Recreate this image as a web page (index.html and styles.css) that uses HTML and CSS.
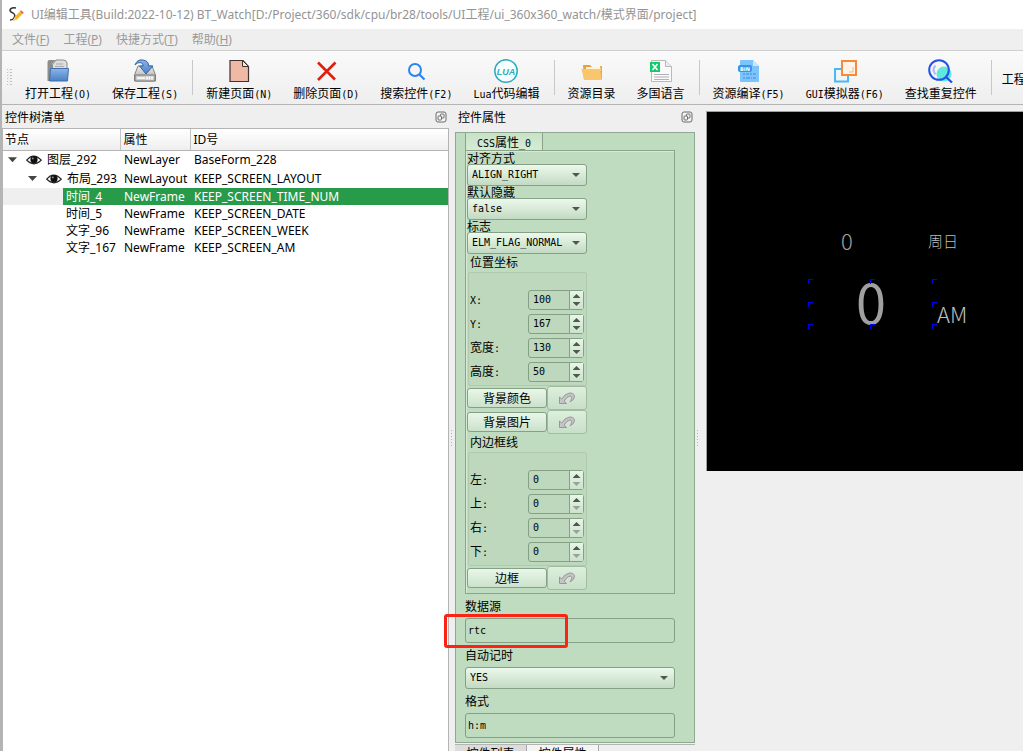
FILE: index.html
```html
<!DOCTYPE html>
<html lang="zh-CN">
<head>
<meta charset="utf-8">
<title>UI编辑工具</title>
<link rel="stylesheet" href="styles.css">
</head>
<body>
<svg class="defs" width="0" height="0" aria-hidden="true">
  <defs>
    <linearGradient id="blue" x1="0" y1="0" x2="0" y2="1"><stop offset="0" stop-color="#8db5e6"/><stop offset="1" stop-color="#4a80c4"/></linearGradient>
    <linearGradient id="metal" x1="0" y1="0" x2="0" y2="1"><stop offset="0" stop-color="#eeeeec"/><stop offset="1" stop-color="#a5a5a3"/></linearGradient>
    <symbol id="undo" viewBox="0 0 18 14"><path d="M1.500 6v6.500h7l-2.400-2.200Q8.500 5.500 12 5q2.800.2.800 4.500l-.8 1.500Q17 8.500 16.500 4.500 15.500 1.500 11.500 2 6.500 3 3.800 8z" fill="#c6c4c8" stroke="#98969a" stroke-width="1"/></symbol>
    <symbol id="eye" viewBox="0 0 16 10"><path d="M.7 5.200Q7.500-3 15.300 5.200Q8 12.500.7 5.200z" fill="#fff" stroke="#222" stroke-width="1.200"/><circle cx="8" cy="4.700" r="3.600" fill="#111"/><circle cx="6.800" cy="3.400" r=".9" fill="#999"/></symbol>
    <symbol id="float" viewBox="0 0 12 12"><rect x="1" y="1" width="10" height="10" rx="2" fill="#f3f3f3" stroke="#6c6c6c"/><rect x="5.500" y="3" width="3.500" height="4" rx=".8" fill="none" stroke="#6c6c6c"/><rect x="3" y="5" width="3.500" height="4" rx=".8" fill="#f3f3f3" stroke="#6c6c6c"/></symbol>
  </defs>
</svg>
<div class="window">
  <header class="titlebar">
    <svg width="17" height="18" viewBox="0 0 17 18"><path d="M8 2Q3 1 2 4q0 2 3 3 3 2 1 5-1 2-4 2" fill="none" stroke="#333" stroke-width="1.500"/><path d="M5 15l1.500-4 6-6 2.500 2.500-6 6z" fill="#f9b51c"/><path d="M12 5.300l1-1 2.800 2.500-1 1z" fill="#e8505a"/><path d="M5 15l1.300-3.500 2.300 2.200z" fill="#eecf9d"/></svg>
    <span>UI编辑工具(Build:2022-10-12) BT_Watch[D:/Project/360/sdk/cpu/br28/tools/UI工程/ui_360x360_watch/模式界面/project]</span>
  </header>
  <nav class="menubar">
    <button>文件(<u>F</u>)</button><button>工程(<u>P</u>)</button><button>快捷方式(<u>T</u>)</button><button>帮助(<u>H</u>)</button>
  </nav>
  <div class="toolbar" role="toolbar">
    <span class="grip"></span>
    <button class="tool"><svg width="24" height="24" viewBox="0 0 24 24"><path d="M1.500 3q0-2 2-2h6L6 5v17H1.500z" fill="#8d8d8d"/><path d="M6.500 5.500L10 1h7.500q3 0 3.500 3v8H6.500z" fill="#dededc" stroke="#8a8a88"/><path d="M10 5h7M9 7.500h9" stroke="#aaa"/><path d="M4.500 9.500h18l-1 12.500H3.500z" fill="url(#blue)" stroke="#3d6fae"/></svg><span>打开工程<i>(O)</i></span></button>
    <button class="tool"><svg width="24" height="24" viewBox="0 0 24 24"><path d="M5 7h14l3.500 9v6h-21v-6z" fill="url(#metal)" stroke="#858583"/><rect x="2" y="16" width="20" height="6" rx="1" fill="#cbcbc9" stroke="#777"/><path d="M4 19h8m2-1.500v3m2.500-3v3m2.500-3v3" stroke="#fff" stroke-width="1.500"/><path d="M2 6Q4 0 10 1q6 1 5.500 6H20l-7 8-6.500-8h3.800Q10 3.500 7 3.500 4 3.500 2 6z" fill="url(#blue)" stroke="#3568a5"/></svg><span>保存工程<i>(S)</i></span></button>
    <span class="sep"></span>
    <button class="tool"><svg width="24" height="24" viewBox="0 0 24 24"><path d="M3 1.500h13l5.500 6v15H3z" fill="#efb9a6" stroke="#3d3331" stroke-width="1.200"/><path d="M15.500 1.500v6h6z" fill="#f9e6df" stroke="#3d3331"/></svg><span>新建页面<i>(N)</i></span></button>
    <button class="tool"><svg width="24" height="24" viewBox="0 0 24 24"><path d="M4 3.500L21 20.500M21.500 3.500L4 21" stroke="#df1f0f" stroke-width="2.600"/></svg><span>删除页面<i>(D)</i></span></button>
    <button class="tool"><svg width="24" height="24" viewBox="0 0 24 24"><circle cx="11" cy="11" r="6" fill="none" stroke="#2b84f5" stroke-width="2"/><path d="M15.500 15.500L20.500 20.500" stroke="#2b84f5" stroke-width="2.200"/></svg><span>搜索控件<i>(F2)</i></span></button>
    <button class="tool"><svg width="24" height="24" viewBox="0 0 24 24"><circle cx="12" cy="12" r="11.200" fill="#f5ffff" stroke="#2faabd" stroke-width="1.500"/><text x="12" y="15.500" class="lua">LUA</text></svg><span><i>Lua</i>代码编辑</span></button>
    <span class="sep"></span>
    <button class="tool"><svg width="24" height="24" viewBox="0 0 24 24"><path d="M3 6h7l2 2h10v12H4z" fill="#e6a13e"/><path d="M6 8h15v4H6z" fill="#fff3d8"/><path d="M1.500 10H20l2 11H4z" fill="#f8c66c"/><path d="M20 7h2v14z" fill="#eaa944"/></svg><span>资源目录</span></button>
    <button class="tool"><svg width="24" height="24" viewBox="0 0 24 24"><path d="M2.500 1.500h14l6 6v15h-20z" fill="#fafafa" stroke="#b9b9bd"/><path d="M16.500 1.500v6h6" fill="#ececf0" stroke="#b9b9bd"/><path d="M5 15.500h15M5 18h15M5 20.500h15" stroke="#b0b0b8"/><rect x="1" y="3" width="10" height="10" fill="#13ca6a"/><path d="M3.500 5l5 6m0-6l-5 6" stroke="#fff" stroke-width="1.600"/></svg><span>多国语言</span></button>
    <span class="sep"></span>
    <button class="tool"><svg width="24" height="24" viewBox="0 0 24 24"><path d="M3 2q0-1 1-1h12l6 6v15q0 1-1 1H4q-1 0-1-1z" fill="#7cc4fa"/><path d="M16 1l6 6h-6z" fill="#c9e7ff"/><path d="M6 15h2m1 0h3m1 0h2m1 0h3M6 19h2m1 0h4m1 0h1m1 0h3" stroke="#58a8ee" stroke-width="2"/><rect x="1" y="6" width="14" height="7" rx="2" fill="#3a92ec"/><text x="8" y="11.500" class="bin">BIN</text></svg><span>资源编译<i>(F5)</i></span></button>
    <button class="tool"><svg width="24" height="24" viewBox="0 0 24 24"><path d="M9 10H2v12.500h13V17" fill="none" stroke="#48b9f5" stroke-width="2"/><rect x="9" y="2" width="14" height="14" fill="#fff4ea" stroke="#f58a3d" stroke-width="2"/><path d="M20 8v5h-4" fill="none" stroke="#f8b58a"/></svg><span><i>GUI</i>模拟器<i>(F6)</i></span></button>
    <button class="tool"><svg width="25" height="24" viewBox="0 0 25 24"><circle cx="16" cy="15" r="7.500" fill="#5fe8de"/><circle cx="11" cy="11" r="9.800" fill="none" stroke="#2452e6" stroke-width="2"/><path d="M7.500 6.500q-4 4 0 9" fill="none" stroke="#a9b9f5" stroke-width="2"/><path d="M18 18l6 5.500" stroke="#2452e6" stroke-width="2.300"/></svg><span>查找重复控件</span></button>
    <span class="sep"></span>
    <button class="tool tool-text"><span>工程</span></button>
  </div>

  <main class="workspace">
    <section class="dock">
      <h2 class="dock-title">控件树清单<button aria-label="浮动"><svg width="12" height="12"><use href="#float"/></svg></button></h2>
      <div class="tree-box">
        <table class="tree">
          <colgroup><col class="c-node"><col class="c-type"><col></colgroup>
          <thead><tr><th>节点</th><th>属性</th><th>ID号</th></tr></thead>
          <tbody>
            <tr class="parent"><td><div class="node"><b class="tri"></b><svg width="16" height="10"><use href="#eye"/></svg>图层_292</div></td><td>NewLayer</td><td>BaseForm_228</td></tr>
            <tr class="parent"><td><div class="node level2"><b class="tri"></b><svg width="16" height="10"><use href="#eye"/></svg>布局_293</div></td><td>NewLayout</td><td>KEEP_SCREEN_LAYOUT</td></tr>
            <tr class="selected"><td><div class="leaf">时间_4</div></td><td>NewFrame</td><td>KEEP_SCREEN_TIME_NUM</td></tr>
            <tr><td><div class="leaf">时间_5</div></td><td>NewFrame</td><td>KEEP_SCREEN_DATE</td></tr>
            <tr><td><div class="leaf">文字_96</div></td><td>NewFrame</td><td>KEEP_SCREEN_WEEK</td></tr>
            <tr><td><div class="leaf">文字_167</div></td><td>NewFrame</td><td>KEEP_SCREEN_AM</td></tr>
          </tbody>
        </table>
      </div>
    </section>
    <div class="splitter"><span></span></div>
    <section class="dock">
      <h2 class="dock-title">控件属性<button aria-label="浮动"><svg width="12" height="12"><use href="#float"/></svg></button></h2>
      <div class="props">
        <button class="css-tab"><i>CSS</i>属性<i>_0</i></button>
        <div class="pane">
          <label for="align">对齐方式</label>
          <span class="select"><select id="align"><option>ALIGN_RIGHT</option></select></span>
          <label for="hide">默认隐藏</label>
          <span class="select"><select id="hide"><option>false</option></select></span>
          <label for="flag">标志</label>
          <span class="select"><select id="flag"><option>ELM_FLAG_NORMAL</option></select></span>
          <h3>位置坐标</h3>
          <div class="group">
            <div class="field"><label for="x"><i>X:</i></label><span class="spin"><input id="x" value="100"><span><button class="up" aria-label="加"></button><button class="down" aria-label="减"></button></span></span></div>
            <div class="field"><label for="y"><i>Y:</i></label><span class="spin"><input id="y" value="167"><span><button class="up" aria-label="加"></button><button class="down" aria-label="减"></button></span></span></div>
            <div class="field"><label for="w">宽度<i>:</i></label><span class="spin"><input id="w" value="130"><span><button class="up" aria-label="加"></button><button class="down" aria-label="减"></button></span></span></div>
            <div class="field"><label for="h">高度<i>:</i></label><span class="spin"><input id="h" value="50"><span><button class="up" aria-label="加"></button><button class="down" aria-label="减"></button></span></span></div>
          </div>
          <div class="pair"><button class="push">背景颜色</button><button class="reset" aria-label="还原背景颜色"><svg width="18" height="14"><use href="#undo"/></svg></button></div>
          <div class="pair"><button class="push">背景图片</button><button class="reset" aria-label="还原背景图片"><svg width="18" height="14"><use href="#undo"/></svg></button></div>
          <h3>内边框线</h3>
          <div class="group">
            <div class="field"><label for="l">左<i>:</i></label><span class="spin"><input id="l" value="0"><span><button class="up" aria-label="加"></button><button class="down off" aria-label="减"></button></span></span></div>
            <div class="field"><label for="t">上<i>:</i></label><span class="spin"><input id="t" value="0"><span><button class="up" aria-label="加"></button><button class="down off" aria-label="减"></button></span></span></div>
            <div class="field"><label for="r">右<i>:</i></label><span class="spin"><input id="r" value="0"><span><button class="up" aria-label="加"></button><button class="down off" aria-label="减"></button></span></span></div>
            <div class="field"><label for="b">下<i>:</i></label><span class="spin"><input id="b" value="0"><span><button class="up" aria-label="加"></button><button class="down off" aria-label="减"></button></span></span></div>
          </div>
          <div class="pair"><button class="push">边框</button><button class="reset" aria-label="还原边框"><svg width="18" height="14"><use href="#undo"/></svg></button></div>
        </div>
        <div class="block"><label for="src">数据源</label><span class="marked"><input class="text" id="src" value="rtc"></span></div>
        <div class="block"><label for="auto">自动记时</label><span class="select wide"><select id="auto"><option>YES</option></select></span></div>
        <div class="block"><label for="fmt">格式</label><input class="text" id="fmt" value="h:m"></div>
      </div>
      <div class="dock-tabs"><button>控件列表</button><button class="active">控件属性</button></div>
    </section>
    <div class="splitter"><span></span></div>
    <section class="stage">
      <div class="screen">
        <span class="item num-small">0</span>
        <span class="item week">周日</span>
        <span class="item num-big">0</span>
        <span class="item am">AM</span>
        <div class="handles"><b></b><b></b><b></b><b></b><b class="none"></b><b></b><b></b><b></b><b></b></div>
      </div>
    </section>
  </main>
</div>
</body>
</html>
```
FILE: styles.css
```css
*, *::before, *::after { box-sizing: border-box; }

body {
  margin: 0;
  background: #efefef;
  color: #000;
  font: 12px/12px "Noto Sans CJK SC", sans-serif;
}

button, input, select {
  margin: 0;
  padding: 0;
  border: 0;
  background: none;
  color: inherit;
  font: inherit;
}

svg { display: block; flex: none; }
.defs { position: absolute; }

/* half-width latin beside full-width characters */
i {
  font: 10px/12px "DejaVu Sans Mono", monospace;
}

.window {
  display: flex;
  flex-direction: column;
  height: 100vh;
  overflow: hidden;
  border-left: 2px solid #b4b4b4;
}

.titlebar {
  display: flex;
  align-items: center;
  gap: 6px;
  height: 29px;
  flex: none;
  padding-left: 6px;
  background: #fff;
  color: #949494;
  font: 12px/18px "Noto Sans", "Noto Sans CJK SC", sans-serif;
  white-space: nowrap;
}

.menubar {
  display: flex;
  gap: 14px;
  height: 22px;
  flex: none;
  padding-left: 10px;
  border-bottom: 1px solid #cfcfcf;
  color: #9a9a9a;
  font: 12px/20px "Noto Sans", "Noto Sans CJK SC", sans-serif;
}

.toolbar {
  display: flex;
  height: 54px;
  flex: none;
  overflow: hidden;
  border-bottom: 1px solid #b4b4b4;
  background: linear-gradient(#fafafa, #eeeeee);
}

.grip {
  width: 5px;
  height: 17px;
  flex: none;
  margin: 18px 3px 0 5px;
  background: linear-gradient(#efefef, #efefef) 1px 0 / 2px 100% no-repeat, repeating-linear-gradient(#c0c0c0 0 1px, transparent 1px 3px);
}

.tool {
  display: flex;
  flex-direction: column;
  align-items: center;
  gap: 3px;
  flex: none;
  padding: 8px 11px 0 10px;
  line-height: 12px;
  white-space: nowrap;
}

.tool > span { line-height: 14px; }
.tool-text { justify-content: center; padding: 2px 7px 0; }

.sep {
  width: 7px;
  flex: none;
  margin: 9px 0;
  background: linear-gradient(#c8c8c8, #c8c8c8) 3px 0 / 1px 100% no-repeat;
}

.lua { font: italic bold 9px "Liberation Sans", sans-serif; fill: #2faabd; text-anchor: middle; }
.bin { font: bold 5px "DejaVu Sans", sans-serif; fill: #fff; text-anchor: middle; }

.workspace {
  display: grid;
  grid-template-columns: 447px 6px 240px 11px 1fr;
  flex: 1;
  min-height: 0;
}

.dock {
  display: flex;
  flex-direction: column;
  min-height: 0;
}

.dock-title {
  display: flex;
  align-items: center;
  justify-content: space-between;
  height: 23px;
  flex: none;
  margin: 0;
  padding: 0 2px 0 3px;
  font-size: 12px;
  font-weight: 400;
}

.splitter { padding: 325px 0 0 2px; }

.splitter span {
  display: block;
  width: 1px;
  height: 16px;
  background: repeating-linear-gradient(#b4b4b4 0 1px, transparent 1px 3px);
}

.tree-box {
  flex: 1;
  border: 1px solid #b4b4b4;
  border-bottom: 0;
  background: #fff;
}

.tree {
  width: 100%;
  border-collapse: collapse;
  table-layout: fixed;
  font: 12px/17px "Noto Sans", "Noto Sans CJK SC", sans-serif;
  white-space: nowrap;
}

.c-node { width: 117px; }
.c-type { width: 70px; }

.tree th {
  height: 21px;
  padding: 0 3px;
  border-right: 1px solid #c4c4c4;
  border-bottom: 1px solid #b4b4b4;
  background: linear-gradient(#ffffff, #eeeeee);
  font-weight: 400;
  text-align: left;
}

.tree th:first-child { padding-left: 2px; }
.tree th:last-child { border-right: 0; }
.tree td { height: 17px; padding: 0 0 0 4px; }
.tree td:first-child { padding: 0; }
.tree .parent td { height: 19px; }

.node {
  display: flex;
  align-items: center;
  gap: 5px;
  padding-left: 5px;
}

.node.level2 { padding-left: 25px; }

.tri {
  width: 9px;
  height: 5px;
  margin-right: 4px;
  background: #444;
  clip-path: polygon(0 0, 100% 0, 50% 100%);
}

.leaf { margin-left: 60px; padding-left: 3px; }
.selected { color: #fff; }
.selected td { background: #289b4b; }
.selected td:first-child { background: #efefef; }
.selected .leaf { background: #289b4b; }

.props {
  flex: none;
  margin-top: 4px;
  padding: 0 19px 4px 9px;
  border: 1px solid #8fa892;
  background: #c0dcc0;
}

.css-tab {
  display: block;
  width: 78px;
  height: 17px;
  border: 1px solid #8ba28b;
  border-width: 0 1px;
  background: linear-gradient(#c8e2c8, #d4ecd4);
  line-height: 15px;
}

.pane {
  display: flex;
  flex-direction: column;
  align-items: flex-start;
  padding: 1px 0 3px 1px;
  border: 1px solid #8ba28b;
  box-shadow: inset 1px 1px #d6ead6;
}

.pane > label { height: 12px; }

.select {
  position: relative;
  display: block;
  width: 120px;
  height: 22px;
}

.select.wide { width: 100%; }

.select::after {
  content: "";
  position: absolute;
  top: 9px;
  right: 7px;
  width: 8px;
  height: 4px;
  background: #4c5a4c;
  clip-path: polygon(0 0, 100% 0, 50% 100%);
  pointer-events: none;
}

.select select {
  width: 100%;
  height: 22px;
  padding: 0 4px;
  appearance: none;
  border: 1px solid #86a086;
  border-radius: 3px;
  background: linear-gradient(#ecf9ec, #c3dac3);
  font: 10px/20px "DejaVu Sans Mono", monospace;
}

h3 {
  margin: 1px 0 4px 3px;
  font-size: 12px;
  font-weight: 400;
  line-height: 13px;
}

.group {
  display: flex;
  flex-direction: column;
  gap: 4px;
  width: 119px;
  margin-left: 1px;
  padding: 17px 2px 3px 1px;
  border: 1px solid #afcaaf;
  border-radius: 2px;
  background: #bdd8bd;
}

.field {
  display: flex;
  align-items: center;
  justify-content: space-between;
  height: 20px;
}

.spin {
  display: flex;
  width: 56px;
  height: 20px;
  border: 1px solid #86a086;
  border-radius: 3px;
}

.spin input {
  width: 40px;
  padding: 0 4px;
  font: 10px/18px "DejaVu Sans Mono", monospace;
}

.spin > span {
  display: flex;
  flex: 1;
  flex-direction: column;
  align-items: center;
  justify-content: center;
  gap: 4px;
  border-left: 1px solid #86a086;
  background: linear-gradient(#e8f6e8, #cde2cd);
}

.spin button {
  width: 8px;
  height: 4px;
  background: #4c5a4c;
  clip-path: polygon(50% 0, 100% 100%, 0 100%);
}

.spin .down { clip-path: polygon(0 0, 100% 0, 50% 100%); }
.spin .off { background: #93a693; }

.pair {
  display: flex;
  align-items: center;
  height: 24px;
}

.push {
  width: 80px;
  height: 20px;
  border: 1px solid #86a086;
  border-radius: 3px;
  background: linear-gradient(#e9f7e9, #cbe1cb);
}

.reset {
  display: grid;
  place-items: center;
  width: 40px;
  height: 24px;
  border: 1px solid #a3bba3;
  border-radius: 3px;
  background: linear-gradient(#dcf0dc, #c8dfc8);
}

.block {
  display: flex;
  flex-direction: column;
  gap: 6px;
  padding-top: 5px;
}

.block > label { line-height: 13px; }

.marked { position: relative; display: block; }

.marked::after {
  content: "";
  position: absolute;
  top: -4px;
  left: -21px;
  width: 124px;
  height: 34px;
  border: 3px solid #fb2314;
  border-radius: 3px;
  pointer-events: none;
}

.text {
  display: block;
  width: 100%;
  height: 25px;
  padding: 0 2px;
  border: 1px solid #86a086;
  border-radius: 3px;
  font: 10px/23px "DejaVu Sans Mono", monospace;
}

.dock-tabs {
  display: flex;
  flex: none;
  margin-top: 1px;
  border-top: 1px solid #b4b4b4;
}

.dock-tabs button {
  display: flex;
  justify-content: center;
  width: 72px;
  height: 22px;
  padding-top: 2px;
  border-right: 1px solid #a8a8a8;
  background: #dcdcdc;
}

.dock-tabs .active { background: #f4f4f4; }

.stage { padding-top: 6px; overflow: hidden; }

.screen {
  position: relative;
  height: 360px;
  border: 1px solid #a0a0a0;
  border-width: 1px 0 0 1px;
  background: #000;
  color: #bdbdbd;
}

.item {
  position: absolute;
  font-weight: 300;
  white-space: nowrap;
}

.num-small { left: 134px; top: 116px; font-size: 22px; line-height: 24px; color: #a0a0a0; }
.week { left: 221px; top: 119px; font-size: 15px; line-height: 20px; }
.num-big { left: 149px; top: 159px; font-size: 54px; font-weight: 400; line-height: 60px; color: #a0a0a0; }
.am { left: 230px; top: 189px; font-size: 22px; line-height: 24px; }

.handles {
  position: absolute;
  left: 101px;
  top: 167px;
  display: grid;
  grid-template-columns: repeat(3, 5px);
  justify-content: space-between;
  align-content: space-between;
  width: 129px;
  height: 50px;
}

.handles b {
  height: 5px;
  border: 1px solid #0000f0;
  border-width: 1px 0 0 1px;
}

.handles .none { visibility: hidden; }
```
